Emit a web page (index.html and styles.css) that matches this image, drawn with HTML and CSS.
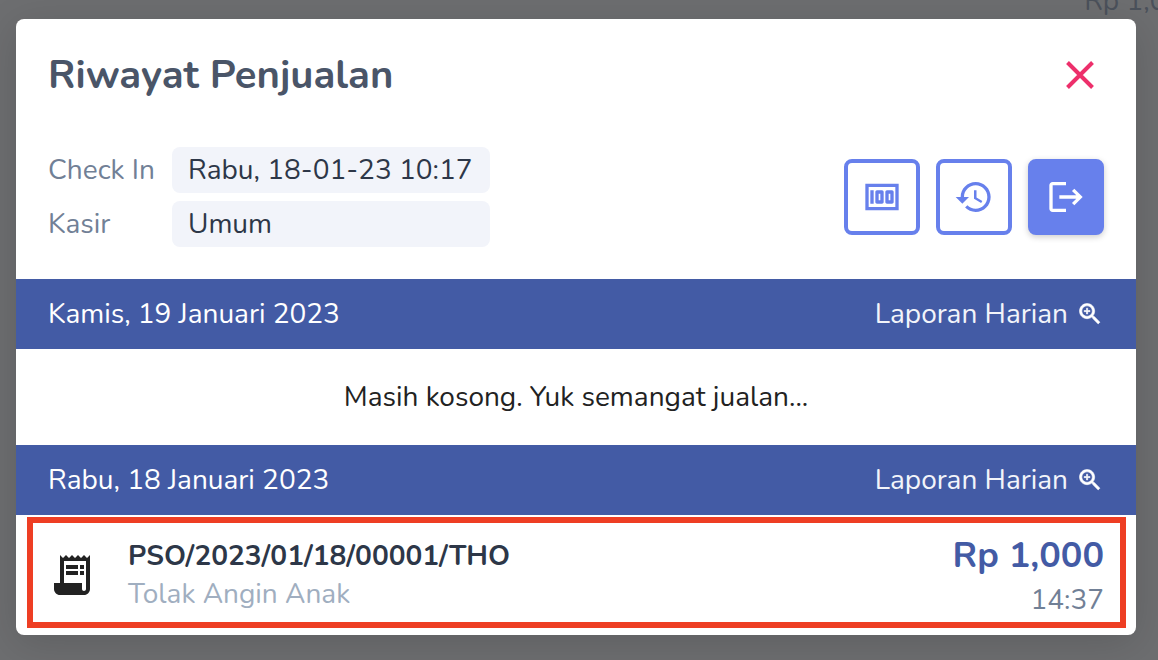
FILE: index.html
```
<!DOCTYPE html>
<html lang="id">
<head>
    <meta charset="UTF-8">
    <meta name="viewport" content="width=device-width, initial-scale=1.0">
    <title>Riwayat Penjualan</title>
    <link rel="stylesheet" href="styles.css">
</head>
<body>
    <!-- Page behind the modal -->
    <div class="page-total">Rp 1,000</div>

    <div class="backdrop">
        <main class="modal" role="dialog" aria-labelledby="modalTitle">
            <header class="modal-header">
                <h1 class="modal-title" id="modalTitle">Riwayat Penjualan</h1>
                <button class="close-btn" type="button" aria-label="Tutup">
                    <svg viewBox="0 0 48 48" width="48" height="48" fill="none" stroke="currentColor" stroke-width="4"><path d="M11.500 11.500l25 25M36.500 11.500l-25 25"/></svg>
                </button>
            </header>

            <section class="session">
                <dl class="session-info">
                    <dt>Check In</dt>
                    <dd>Rabu, 18-01-23 10:17</dd>
                    <dt>Kasir</dt>
                    <dd>Umum</dd>
                </dl>
                <div class="actions">
                    <button class="action-btn" type="button" aria-label="Kas">
                        <svg viewBox="0 0 24 24" width="40" height="40" fill="currentColor"><path d="M15 16h3c.55 0 1-.45 1-1V9c0-.55-.45-1-1-1h-3c-.55 0-1 .45-1 1v6c0 .55.45 1 1 1zm1-6h1v4h-1v-4zm-7 6h3c.55 0 1-.45 1-1V9c0-.55-.45-1-1-1H9c-.55 0-1 .45-1 1v6c0 .55.45 1 1 1zm1-6h1v4h-1v-4zM5 8h2v8H5zM2 4v16h20V4H2zm2 14V6h16v12H4z"/></svg>
                    </button>
                    <button class="action-btn" type="button" aria-label="Riwayat">
                        <svg viewBox="0 0 24 24" width="40" height="40" fill="currentColor"><path d="M13 3c-4.97 0-9 4.03-9 9H1l3.89 3.89.07.14L9 12H6c0-3.87 3.13-7 7-7s7 3.13 7 7-3.13 7-7 7c-1.93 0-3.68-.79-4.94-2.06l-1.42 1.42C8.27 19.99 10.51 21 13 21c4.97 0 9-4.03 9-9s-4.03-9-9-9zm-1 5v5l4.28 2.54.72-1.21-3.5-2.08V8H12z"/></svg>
                    </button>
                    <button class="action-btn action-btn-primary" type="button" aria-label="Keluar">
                        <svg viewBox="0 0 24 24" width="40" height="40" fill="currentColor"><path d="M12 3H4c-1.100 0-2 .9-2 2v14c0 1.100.9 2 2 2h8v-2H4V5h8V3zM17 7l-1.410 1.410L18.170 11H8v2h10.170l-2.580 2.580L17 17l5-5z"/></svg>
                    </button>
                </div>
            </section>

            <section class="day">
                <div class="day-header">
                    <h2 class="day-title">Kamis, 19 Januari 2023</h2>
                    <button class="report-btn" type="button">
                        Laporan Harian
                        <svg class="zoom-icon" viewBox="0 0 24 24" width="28" height="28"><path d="M15.5 14h-.79l-.28-.27C15.410 12.590 16 11.110 16 9.500 16 5.910 13.090 3 9.500 3S3 5.910 3 9.500 5.910 16 9.500 16c1.610 0 3.090-.59 4.230-1.570l.27.28v.79l5 4.990L20.490 19l-4.990-5zm-6 0C7.010 14 5 11.990 5 9.500S7.010 5 9.500 5 14 7.010 14 9.500 11.990 14 9.500 14zm2.500-4h-2v2H9v-2H7V9h2V7h1v2h2v1z"/></svg>
                    </button>
                </div>
                <p class="day-empty">Masih kosong. Yuk semangat jualan...</p>
            </section>

            <section class="day">
                <div class="day-header">
                    <h2 class="day-title">Rabu, 18 Januari 2023</h2>
                    <button class="report-btn" type="button">
                        Laporan Harian
                        <svg class="zoom-icon" viewBox="0 0 24 24" width="28" height="28"><path d="M15.5 14h-.79l-.28-.27C15.410 12.590 16 11.110 16 9.500 16 5.910 13.090 3 9.500 3S3 5.910 3 9.500 5.910 16 9.500 16c1.610 0 3.090-.59 4.230-1.570l.27.28v.79l5 4.990L20.490 19l-4.990-5zm-6 0C7.010 14 5 11.990 5 9.500S7.010 5 9.500 5 14 7.010 14 9.500 11.990 14 9.500 14zm2.500-4h-2v2H9v-2H7V9h2V7h1v2h2v1z"/></svg>
                    </button>
                </div>
                <div class="sale">
                    <svg class="sale-icon" viewBox="0 0 24 24" width="48" height="48" fill="currentColor"><path d="M19.500 3.500L18 2l-1.500 1.500L15 2l-1.500 1.500L12 2l-1.500 1.500L9 2 7.500 3.500 6 2v14H3v3c0 1.660 1.340 3 3 3h12c1.660 0 3-1.340 3-3V2l-1.500 1.500zM19 19c0 .55-.45 1-1 1s-1-.45-1-1v-3H8V5h11v14z"/><path d="M9 7h6v2H9zM16 7h2v2h-2zM9 10h6v2H9zM16 10h2v2h-2z"/></svg>
                    <div class="sale-info">
                        <div class="sale-number">PSO/2023/01/18/00001/THO</div>
                        <div class="sale-items">Tolak Angin Anak</div>
                    </div>
                    <div class="sale-amount">
                        <div class="sale-total">Rp 1,000</div>
                        <div class="sale-time">14:37</div>
                    </div>
                    <div class="highlight"></div>
                </div>
            </section>
        </main>
    </div>
</body>
</html>
```
FILE: styles.css
```
* {
    margin: 0;
    padding: 0;
    box-sizing: border-box;
}

body {
    background: #6d6e70;
    overflow: hidden;
    font-family: Nunito, Lato, sans-serif;
    font-size: 28px;
    line-height: 38px;
    color: #222;
}

svg {
    display: block;
    flex-shrink: 0;
}

button {
    font: inherit;
    color: inherit;
    background: none;
    border: none;
    cursor: pointer;
}

/* Cut off by the top and right edges of the window */
.page-total {
    position: absolute;
    top: -18px;
    right: -42px;
    color: #4b515b;
}

.backdrop {
    position: relative;
    min-height: 100vh;
    padding: 19px 22px 25px 16px;
}

.modal {
    background: #fff;
    border-radius: 8px;
    box-shadow: 0 8px 40px rgba(0,0,0,0.14);
}

.modal-header {
    display: flex;
    align-items: center;
    justify-content: space-between;
    padding: 32px 32px 0;
}

.modal-title {
    font-size: 40px;
    line-height: 48px;
    font-weight: 700;
    color: #4a5568;
}

.close-btn {
    color: #ed2f6b;
}

.session {
    display: flex;
    align-items: center;
    justify-content: space-between;
    padding: 48px 32px 32px;
}

.session-info {
    display: grid;
    grid-template-columns: auto 318px;
    gap: 8px 16px;
    line-height: 46px;
}

.session-info dt {
    min-width: 108px;
    color: #718096;
}

.session-info dd {
    padding: 0 16px;
    border-radius: 8px;
    background: #f2f4fa;
    color: #2d3748;
}

.actions {
    display: flex;
    gap: 16px;
}

.action-btn {
    display: flex;
    align-items: center;
    justify-content: center;
    width: 76px;
    height: 76px;
    border: 4px solid #6780ec;
    border-radius: 8px;
    color: #6780ec;
}

.action-btn-primary {
    background: #6780ec;
    color: #fff;
    box-shadow: 0 2px 6px rgba(0,0,0,0.2);
}

.day-header {
    display: flex;
    align-items: center;
    justify-content: space-between;
    padding: 16px 32px;
    background: #435ba5;
    color: #fff;
}

.day-title {
    font-size: 28px;
    font-weight: 400;
}

.report-btn {
    display: flex;
    align-items: center;
    gap: 8px;
    color: #f2f4fa;
}

.zoom-icon {
    fill: #fff;
    stroke: #fff;
    stroke-width: 0.5;
}

.day-empty {
    padding: 29px 32px;
    text-align: center;
}

.sale {
    position: relative;
    display: flex;
    align-items: center;
    gap: 32px;
    padding: 16px 32px;
}

.sale-info {
    flex: 1;
}

.sale-number {
    font-weight: 700;
    color: #2d3748;
}

.sale-items {
    color: #a0aec0;
}

.sale-amount {
    text-align: right;
}

.sale-total {
    font-size: 36px;
    line-height: 50px;
    font-weight: 700;
    color: #435ba5;
}

.sale-time {
    line-height: 38px;
    color: #718096;
}

/* Red frame round the new sale */
.highlight {
    position: absolute;
    inset: 2px 10px 7px 11px;
    border: 6px solid #ee3e23;
    pointer-events: none;
}
```
